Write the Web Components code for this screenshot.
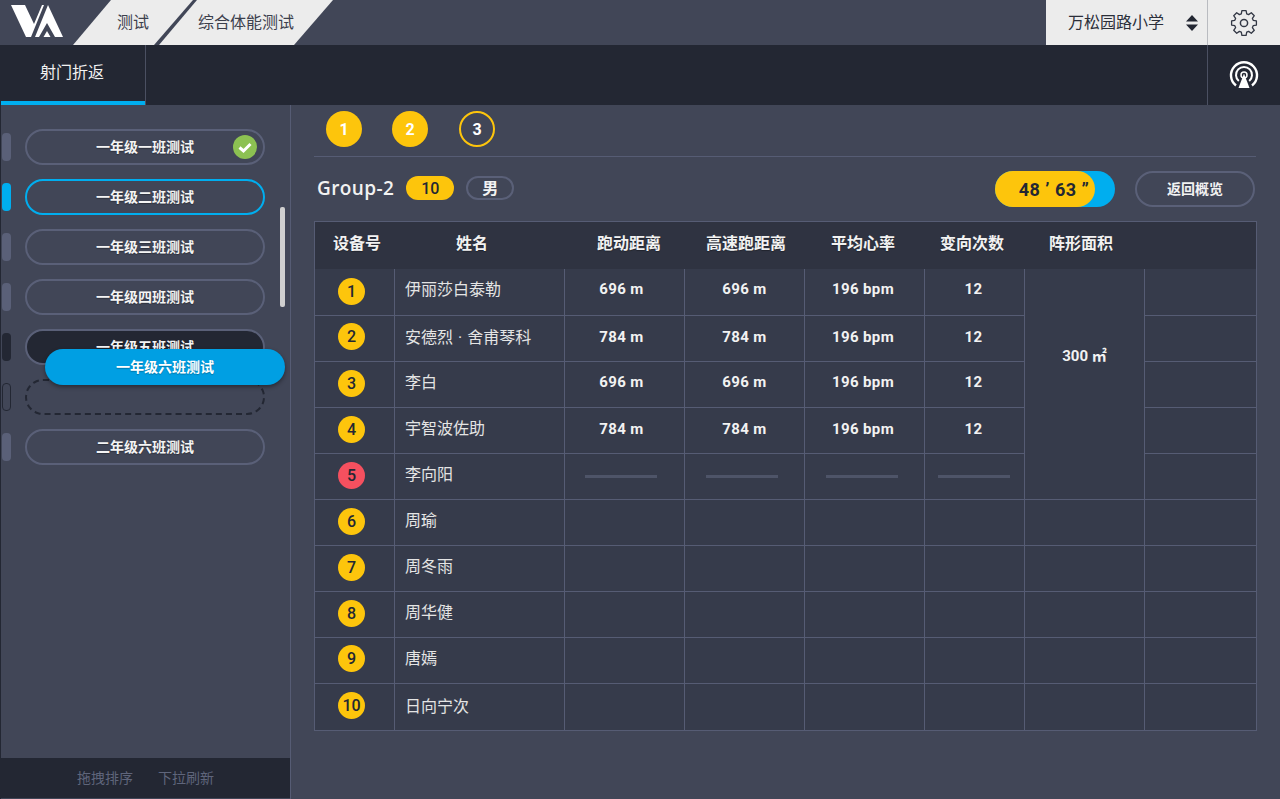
<!DOCTYPE html>
<html lang="zh">
<head>
<meta charset="utf-8">
<title>综合体能测试</title>
<style>
  html, body { margin: 0; padding: 0; height: 100%; background: #414657; overflow: hidden; }
  body { font-family: Roboto, "Noto Sans CJK SC", sans-serif; color: #fff; }
</style>
</head>
<body>
<va-app></va-app>

<script>
const cjk = `Roboto, "Noto Sans CJK SC", sans-serif`;

// 8 tooth cog outline, tooth pointing up
function gearPath() {
    const pts = [];
    for (let i = 0; i < 8; i++) {
        const a = -Math.PI / 2 + i * Math.PI / 4;
        [[-.29, 9.6], [-.17, 12.6], [.17, 12.6], [.29, 9.6]].forEach(([d, r]) => {
            pts.push((14 + r * Math.cos(a + d)).toFixed(1) + " " + (14 + r * Math.sin(a + d)).toFixed(1));
        });
    }
    return "M" + pts.join("L") + "Z";
}

class VaTopBar extends HTMLElement {
    constructor () {
        super();
        this.attachShadow({mode: "open"});
        this.shadowRoot.innerHTML = `
            <style>
                :host { display: flex; height: 45px; background: #414657; font: 16px ${cjk}; color: #3c404c; }
                .logo { width: 72px; padding: 5px 0 0 11px; box-sizing: border-box; }
                .tabs { display: flex; flex: 1; margin-left: 1px; }
                .tab {
                    height: 45px; display: flex; align-items: center; justify-content: center;
                    background: #ececec; box-sizing: border-box; padding-bottom: 3px;
                    clip-path: polygon(38px 0, 100% 0, calc(100% - 39px) 100%, 0 100%);
                }
                .tab + .tab { margin-left: -34px; }
                .one { width: 120px; }
                .two { width: 174px; }
                .school {
                    width: 162px; margin-left: auto; background: #ececec; display: flex; align-items: center;
                    box-sizing: border-box; padding: 0 9px 3px 22px; justify-content: space-between;
                    border-right: 1px solid #b9bbc0; color: #2b2f3a;
                }
                .school svg { margin-top: 3px; }
                .gear { width: 72px; background: #ececec; display: flex; align-items: center; justify-content: center; }
            </style>
            <div class="logo">
                <svg width="54" height="34" viewBox="0 0 54 34">
                    <path fill="#fff" d="M0 0H14L23 19L31 0H33L20 32H15Z"/>
                    <path fill="#fff" fill-rule="evenodd" d="M37 0L52 32H24ZM36 18L28 32H44Z"/>
                    <path fill="#fff" d="M36 26L39.500 32H32.500Z"/>
                </svg>
            </div>
            <div class="tabs">
                <div class="tab one">测试</div>
                <div class="tab two">综合体能测试</div>
            </div>
            <div class="school">
                <span>万松园路小学</span>
                <svg width="12" height="16" viewBox="0 0 12 16"><path fill="#232733" d="M6 0L12 6.500H0ZM6 16L0 9.500H12Z"/></svg>
            </div>
            <div class="gear">
                <svg width="28" height="28" viewBox="0 0 28 28" fill="none" stroke="#333845" stroke-width="1.300" stroke-linejoin="round">
                    <path d="${gearPath()}"/>
                    <circle cx="14" cy="14" r="3.600" stroke-width="1.500"/>
                </svg>
            </div>
        `;
    }
}
customElements.define("va-top-bar", VaTopBar);

class VaSubBar extends HTMLElement {
    constructor () {
        super();
        this.attachShadow({mode: "open"});
        this.shadowRoot.innerHTML = `
            <style>
                :host { display: flex; height: 60px; background: #232733; font: 16px ${cjk}; color: #f2f2f2; box-sizing: border-box; padding-left: 1px; }
                .tab {
                    width: 144px; box-sizing: border-box; border-bottom: 4px solid #00aeef;
                    display: flex; align-items: center; justify-content: center; padding: 0 2px 4px 0;
                }
                .line { width: 1px; background: #4b5062; }
                .signal {
                    margin-left: auto; width: 73px; border-left: 1px solid #4b5062; box-sizing: border-box;
                    display: flex; align-items: center; justify-content: center;
                }
            </style>
            <div class="tab">射门折返</div>
            <div class="line"></div>
            <div class="signal">
                <svg width="30" height="30" viewBox="0 0 30 30" fill="none" stroke="#fff">
                    <path stroke-width="2.400" d="M7 25.500A13 13 0 1 1 23 25.500"/>
                    <path stroke-width="2" d="M9.800 21A8 8 0 1 1 20.200 21"/>
                    <circle cx="15" cy="15" r="3" stroke-width="1.500"/>
                    <path fill="#fff" stroke="none" d="M15 13.500L20.500 28H9.500Z"/>
                </svg>
            </div>
        `;
    }
}
customElements.define("va-sub-bar", VaSubBar);

class ClassPill extends HTMLElement {
    constructor () {
        super();
        this.attachShadow({mode: "open"});
        this.shadowRoot.innerHTML = `
            <style>
                :host {
                    display: flex; align-items: center; gap: 14px; height: 36px; padding-left: 1px;
                    font: bold 14px ${cjk}; color: #f4f4f4; text-shadow: 0 1px 1px rgba(0,0,0,.3);
                }
                .handle { width: 9px; height: 28px; border-radius: 4px; background: #5a6078; box-sizing: border-box; flex: none; }
                .pill {
                    position: relative; width: 240px; height: 36px; box-sizing: border-box;
                    border: 2px solid #5a6078; border-radius: 18px; padding-bottom: 2px;
                    display: flex; align-items: center; justify-content: center;
                    overflow: hidden;
                }
                :host([state="active"]) .handle { background: #00aeef; }
                :host([state="active"]) .pill { border-color: #00aeef; }
                :host([state="under"]) .handle { background: #232733; }
                :host([state="under"]) .pill { background: #232733; }
                :host([state="gap"]) .handle { background: none; border: 1px solid #232733; }
                :host([state="gap"]) .pill { border: 2px dashed #232733; }
                ::slotted(svg) { position: absolute; right: 6px; top: 4px; }
            </style>
            <div class="handle"></div>
            <div class="pill"><span id="label"></span><slot></slot></div>
        `;
    }
    connectedCallback() {
        this.shadowRoot.getElementById("label").textContent = this.getAttribute("label") || "";
    }
}
customElements.define("class-pill", ClassPill);

class VaSidebar extends HTMLElement {
    constructor () {
        super();
        this.attachShadow({mode: "open"});
        this.shadowRoot.innerHTML = `
            <style>
                :host {
                    display: flex; flex-direction: column; position: relative; width: 291px; box-sizing: border-box;
                    border-left: 1px solid #232733; border-right: 1px solid #565c74;
                    font: bold 14px ${cjk};
                }
                .list { flex: 1; display: flex; flex-direction: column; gap: 14px; padding: 24px 0 0 0; }
                .bar {
                    height: 41px; background: #232733; display: flex; align-items: center; justify-content: center;
                    gap: 25px; padding: 0 0 2px 0; font: 14px ${cjk}; color: #5f657b; border-bottom: 1px solid #414657; box-sizing: border-box;
                }
                .drag {
                    position: absolute; left: 44px; top: 244px; width: 240px; height: 36px; border-radius: 18px;
                    background: #009fe3; color: #fff; display: flex; align-items: center; justify-content: center;
                    box-shadow: 0 2px 4px rgba(0,0,0,.4); padding-bottom: 2px; box-sizing: border-box; text-shadow: 0 1px 1px rgba(0,0,0,.25);
                }
                .scroll { position: absolute; left: 279px; top: 102px; width: 5px; height: 100px; border-radius: 2px; background: #cfcfcf; }
            </style>
            <div class="list"><slot></slot></div>
            <div class="scroll"></div>
            <div class="drag">一年级六班测试</div>
            <div class="bar"><span>拖拽排序</span><span>下拉刷新</span></div>
        `;
    }
}
customElements.define("va-sidebar", VaSidebar);

class NumBadge extends HTMLElement {
    constructor () {
        super();
        this.attachShadow({mode: "open"});
        this.shadowRoot.innerHTML = `
            <style>
                :host {
                    display: inline-flex; align-items: center; justify-content: center;
                    width: var(--size, 27px); height: var(--size, 27px); border-radius: 50%; flex: none;
                    background: #fdc50c; color: #232733; font: 500 var(--fs, 16px) Roboto, sans-serif; box-sizing: border-box;
                }
                :host([tone="red"]) { background: #f5505f; }
                :host([tone="round"]) { color: #fff; font-weight: 700; }
                :host([tone="hollow"]) { background: none; border: 2px solid #fdc50c; color: #fff; font-weight: 700; }
            </style>
            <slot></slot>
        `;
    }
}
customElements.define("num-badge", NumBadge);

class ResultTable extends HTMLElement {
    constructor () {
        super();
        this.attachShadow({mode: "open"});
        // text sits off the column centre in the design: [left, right] padding per column
        const heads = [
            ["设备号", 5, 0], ["姓名", 0, 14], ["跑动距离", 10, 0], ["高速跑距离", 4, 0],
            ["平均心率", 0, 2], ["变向次数", 0, 4], ["阵形面积", 0, 6], ["", 0, 0],
        ];
        const names = ["伊丽莎白泰勒", `<span>安德烈<span class="dot"> · </span>舍甫琴科</span>`, "李白", "宇智波佐助", "李向阳", "周瑜", "周冬雨", "周华健", "唐嫣", "日向宁次"];
        const stats = [["696 m", "696 m", "196 bpm", "12"], ["784 m", "784 m", "196 bpm", "12"]];
        const statShift = [6, 0, 3, 2];
        const dashShift = [8, 6, 6, 2];
        const badgeLift = [1, 4, 2, 2, 2, 2, 2, 2, 4, 3];
        const nameLift = [8, 5, 7, 7, 7, 7, 7, 7, 7, 5];
        const statLift = [7, 4, 6, 4];
        let cells = heads.map(([h, l, r]) => `<div class="head" style="padding-left:${l}px;padding-right:${r}px">${h}</div>`).join("");
        names.forEach((name, i) => {
            const row = i + 2;
            const top = i === 0 ? " first" : "";
            const tone = i === 4 ? ` tone="red"` : "";
            cells += `<div class="cell nol${top}" style="grid-row:${row};grid-column:1;padding:0 6px ${badgeLift[i]}px 0"><num-badge${tone}>${i + 1}</num-badge></div>`;
            cells += `<div class="cell name${top}" style="grid-row:${row};grid-column:2;padding-bottom:${nameLift[i]}px">${name}</div>`;
            for (let c = 0; c < 4; c++) {
                let inner = "";
                if (i < 4) inner = stats[i % 2][c];
                else if (i === 4) inner = `<span class="dash"></span>`;
                const shift = i === 4 ? dashShift[c] : statShift[c];
                const lift = i < 4 ? statLift[i] : 0;
                cells += `<div class="cell stat${top}" style="grid-row:${row};grid-column:${c + 3};padding:0 ${shift}px ${lift}px 0">${inner}</div>`;
            }
            if (i >= 5) cells += `<div class="cell" style="grid-row:${row};grid-column:7"></div>`;
            cells += `<div class="cell${top}" style="grid-row:${row};grid-column:8"></div>`;
        });
        cells += `<div class="cell stat area first" style="grid-row:2 / span 5;grid-column:7;padding-bottom:60px">300 ㎡</div>`;
        this.shadowRoot.innerHTML = `
            <style>
                :host { display: block; width: 943px; box-sizing: border-box; border: 1px solid #565c74; background: #363b4b; }
                .grid {
                    display: grid;
                    grid-template-columns: 79px 170px 120px 120px 120px 100px 120px 112px;
                    grid-template-rows: 47px repeat(9, 46px) 47px;
                }
                .head {
                    background: #2f3341; display: flex; align-items: center; justify-content: center; box-sizing: border-box;
                    font: bold 16px ${cjk}; color: #f2f2f2; padding-bottom: 7px; text-shadow: 0 1px 1px rgba(0,0,0,.3);
                }
                .cell {
                    display: flex; align-items: center; justify-content: center; box-sizing: border-box;
                    border-left: 1px solid #565c74; border-top: 1px solid #565c74;
                    font: 16px ${cjk}; color: #e4e4e4;
                }
                .nol { border-left: 0; }
                .first { border-top: 0; }
                .name { justify-content: flex-start; padding-left: 10px; }
                .dot { margin: 0 1px; }
                .stat { font: bold 15px ${cjk}; color: #f2f2f2; letter-spacing: .4px; }
                .area { letter-spacing: 0; }
                .dash { width: 72px; height: 3px; background: #4e5468; }
            </style>
            <div class="grid">${cells}</div>
        `;
    }
}
customElements.define("result-table", ResultTable);

class VaMain extends HTMLElement {
    constructor () {
        super();
        this.attachShadow({mode: "open"});
        this.shadowRoot.innerHTML = `
            <style>
                :host { display: block; flex: 1; padding: 6px 23px 0 23px; box-sizing: border-box; font-family: ${cjk}; }
                .rounds {
                    --size: 36px; --fs: 16px;
                    display: flex; gap: 30px; padding: 0 0 9px 12px; border-bottom: 1px solid #565c74; margin-right: 1px;
                }
                .rounds num-badge:nth-child(3) { margin-left: 1px; }
                .head { display: flex; align-items: center; height: 36px; margin: 14px 0; }
                .title { font: 600 19px "Open Sans", sans-serif; color: #f2f2f2; margin: 0 0 3px 3px; letter-spacing: .4px; }
                .tag {
                    width: 48px; height: 24px; border-radius: 12px; box-sizing: border-box; margin: 0 0 2px 12px;
                    display: flex; align-items: center; justify-content: center;
                }
                .num { background: #fdc50c; color: #232733; font: 500 16px Roboto, sans-serif; }
                .sex { border: 2px solid #5a6078; color: #f2f2f2; font: bold 16px ${cjk}; padding-bottom: 2px; }
                .timer {
                    margin-left: auto; width: 120px; height: 36px; border-radius: 18px; background: #00aeef;
                }
                .timer span {
                    display: flex; align-items: center; justify-content: center; width: 100px; height: 36px; border-radius: 18px;
                    background: #fdc50c; color: #232733; font: bold 18px Roboto, sans-serif; white-space: pre;
                    box-sizing: border-box; padding-left: 18px; letter-spacing: .5px;
                }
                .back {
                    width: 120px; height: 36px; border-radius: 18px; margin: 0 2px 0 20px; box-sizing: border-box; border: 2px solid #5a6078;
                    display: flex; align-items: center; justify-content: center; font: bold 14px ${cjk}; color: #f2f2f2; padding-bottom: 3px;
                }
            </style>
            <div class="rounds">
                <num-badge tone="round">1</num-badge>
                <num-badge tone="round">2</num-badge>
                <num-badge tone="hollow">3</num-badge>
            </div>
            <div class="head">
                <div class="title">Group-2</div>
                <div class="tag num">10</div>
                <div class="tag sex">男</div>
                <div class="timer"><span>48 ’ 63 ”</span></div>
                <div class="back">返回概览</div>
            </div>
            <result-table></result-table>
        `;
    }
}
customElements.define("va-main", VaMain);

class VaApp extends HTMLElement {
    constructor () {
        super();
        this.attachShadow({mode: "open"});
        this.shadowRoot.innerHTML = `
            <style>
                :host { display: flex; flex-direction: column; width: 1280px; height: 799px; }
                .body { flex: 1; display: flex; min-height: 0; }
                va-sidebar { height: 694px; }
            </style>
            <va-top-bar></va-top-bar>
            <va-sub-bar></va-sub-bar>
            <div class="body">
                <va-sidebar>
                    <class-pill label="一年级一班测试">
                        <svg width="24" height="24" viewBox="0 0 24 24"><circle cx="12" cy="12" r="12" fill="#8cc152"/><path d="M6.500 12.500L10.500 16L17.500 9" fill="none" stroke="#fff" stroke-width="3"/></svg>
                    </class-pill>
                    <class-pill label="一年级二班测试" state="active"></class-pill>
                    <class-pill label="一年级三班测试"></class-pill>
                    <class-pill label="一年级四班测试"></class-pill>
                    <class-pill label="一年级五班测试" state="under"></class-pill>
                    <class-pill state="gap"></class-pill>
                    <class-pill label="二年级六班测试"></class-pill>
                </va-sidebar>
                <va-main></va-main>
            </div>
        `;
    }
}
customElements.define("va-app", VaApp);
</script>
</body>
</html>
